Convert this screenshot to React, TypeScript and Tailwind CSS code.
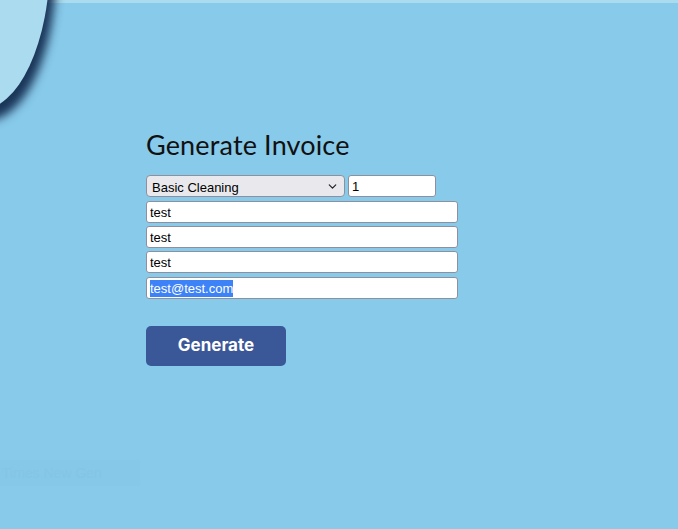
import { ChevronDown } from "lucide-react";

const inputCls =
    "h-[22px] w-[312px] rounded-[3px] border border-[#8f8f9d] bg-white px-[3px] text-[13px] text-black outline-none font-['Liberation_Sans',Arial,sans-serif]";

export default function App() {
    return (
        <main className="relative min-h-[529px] w-full overflow-hidden bg-[#88caea] font-['Liberation_Sans',Arial,sans-serif]">
            <div className="h-[3px] w-full bg-[#abdbee]" />

            {/* corner decoration */}
            <div className="absolute left-[-90px] top-[-190px] h-[300px] w-[140px] rounded-[50%] bg-[#abdbee] shadow-[6px_11px_10px_rgba(20,45,80,0.95)]" />

            <section className="pl-[146px] pt-[124px]">
                <h1 className="text-[27px] leading-[36px] text-[#111] font-['Lato',sans-serif] tracking-[0.15px]">Generate Invoice</h1>

                <form className="mt-[12px] flex flex-col gap-[3px]" onSubmit={e => e.preventDefault()}>
                    <div className="mb-[1px] flex gap-[3px]">
                        <div className="relative h-[22px] w-[199px] rounded-[4px] border border-[#8f8f9d] bg-[#e9e9ed]">
                            <span className="absolute left-[5px] top-[2px] text-[13px] text-black">Basic Cleaning</span>
                            <ChevronDown className="absolute right-[5px] top-[4px] h-[13px] w-[13px] text-[#222]" strokeWidth={2.2} />
                        </div>
                        <input className="h-[22px] w-[88px] rounded-[3px] border border-[#8f8f9d] bg-white px-[3px] text-[13px] text-black outline-none" defaultValue="1" />
                    </div>
                    <input className={inputCls} defaultValue="test" />
                    <input className={inputCls} defaultValue="test" />
                    <input className={inputCls} defaultValue="test" />
                    <div className={inputCls + " mt-[1px] flex items-center"}>
                        <span className="bg-[#3d82f6] leading-[17px] text-white">test@test.com</span>
                    </div>

                    <button className="mt-[24px] h-[40px] w-[140px] rounded-[5px] bg-[#3a5797] text-[17px] font-bold text-white font-['Inter',sans-serif]">
                        Generate
                    </button>
                </form>
            </section>

            <div className="absolute left-0 top-[460px] h-[26px] w-[140px] bg-[#86c8e8] px-[2px] text-[14px] text-[#84c5e5] leading-[26px] whitespace-nowrap">
                Times New Gen
            </div>
        </main>
    );
}
